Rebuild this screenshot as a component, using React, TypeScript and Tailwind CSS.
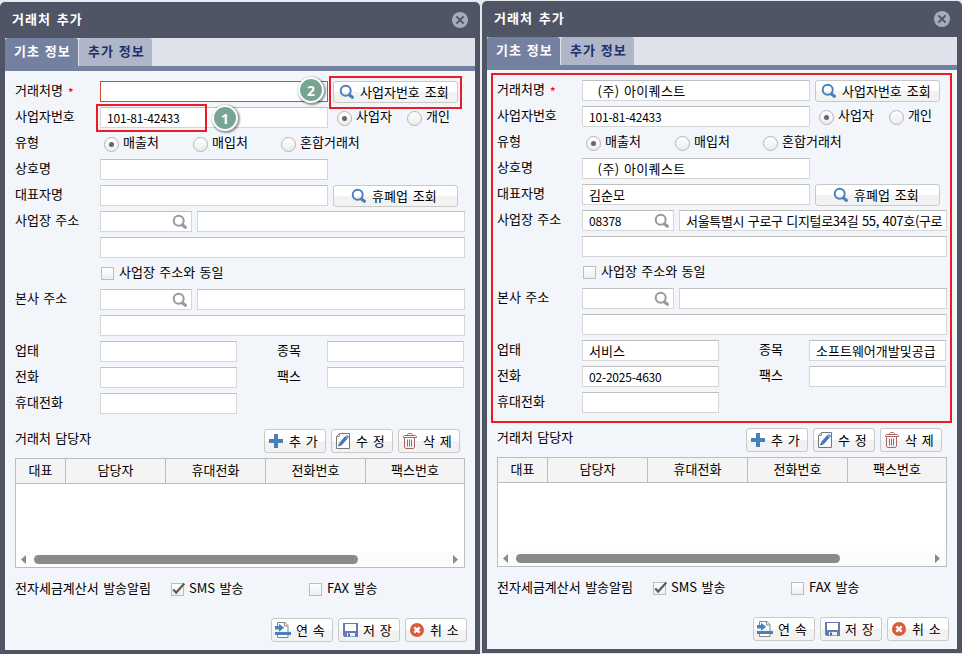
import type { ReactNode } from 'react';
import clsx from 'clsx';

type DialogData = {
  name?: string;
  bizNo?: string;
  company?: string;
  owner?: string;
  zip?: string;
  address?: string;
  industry?: string;
  item?: string;
  phone?: string;
};

const filled: DialogData = {
  name: '(주) 아이퀘스트',
  bizNo: '101-81-42433',
  company: '(주) 아이퀘스트',
  owner: '김순모',
  zip: '08378',
  address: '서울특별시 구로구 디지털로34길 55, 407호(구로',
  industry: '서비스',
  item: '소프트웨어개발및공급',
  phone: '02-2025-4630',
};

const SearchIcon = ({ color }: { color: string }) => (
  <svg width="16" height="16" viewBox="0 0 16 16" fill="none" className="shrink-0">
    <circle cx="6.7" cy="6.8" r="5" stroke={color} strokeWidth="2" />
    <path d="M10.4 11 L13.4 13.2" stroke={color} strokeWidth="3.2" strokeLinecap="round" />
  </svg>
);

const PlusIcon = () => (
  <svg width="14" height="14" viewBox="0 0 14 14" className="shrink-0">
    <path d="M5 0h4v5h5v4H9v5H5V9H0V5h5z" fill="#4a80b8" />
  </svg>
);

const EditIcon = () => (
  <svg width="14" height="16" viewBox="0 0 14 16" fill="none" className="shrink-0">
    <path d="M3.5 .5h10v15H.5V3.5z" fill="#fff" stroke="#777" />
    <path d="M.5 3.5h3v-3" stroke="#999" />
    <path d="M4.2 11.4 L10.6 4.2" stroke="#3f7abf" strokeWidth="3.4" />
    <path d="M2 13.6l.9-3 2.3 1.9z" fill="#35618f" />
    <path d="M10.4 2.4l2.4 2.2" stroke="#5d8fc8" strokeWidth="1.6" />
  </svg>
);

const TrashIcon = () => (
  <svg width="14" height="16" viewBox="0 0 14 16" fill="none" stroke="#ab6464" className="shrink-0">
    <path d="M4.5 2.5v-1l1-1h3l1 1v1M.5 4.5v-1l1-1h11l1 1v1zM1.5 5v9l1 1.5h8l1-1.5V5M4.5 6.5v7M6.5 6.5v7M8.5 6.5v7" />
  </svg>
);

const ContinueIcon = () => (
  <svg width="16" height="16" viewBox="0 0 16 16" fill="none" className="shrink-0">
    <path d="M2.5 4V.5h7.5l3 3V10M9.5 .5v3.5h3.5M2.5 12v3.5h10.5V13" fill="#fff" stroke="#858585" />
    <path d="M0 10h16v3H0z" fill="#4a80b8" />
    <path d="M0 4h4V1.8L9.2 5.8 4 9.8V7.6H0z" fill="#4584bf" />
  </svg>
);

const SaveIcon = () => (
  <svg width="15" height="14" viewBox="0 0 15 14" className="shrink-0">
    <path d="M0 0h15v14H1.5L0 12.5z" fill="#6479b5" />
    <path d="M2 1h11v7H2z" fill="#fff" />
    <path d="M4 10h8v3.4H4z" fill="#eef1f8" />
    <path d="M5 10.6h2v2.8H5z" fill="#5268a6" />
  </svg>
);

const CancelIcon = () => (
  <svg width="14" height="14" viewBox="0 0 14 14" className="shrink-0">
    <circle cx="7" cy="7" r="7" fill="#da5b3b" />
    <path d="M4.3 4.3l5.4 5.4M9.7 4.3L4.3 9.7" stroke="#fff" strokeWidth="2.4" />
  </svg>
);

const Input = ({ className, value, error, numeric, search }: {
  className: string;
  value?: string;
  error?: boolean;
  numeric?: boolean;
  search?: boolean;
}) => (
  <div
    className={clsx(
      'flex h-[21px] shrink-0 items-center overflow-hidden border bg-white px-[6px]',
      error ? 'border-[#cf4d35]' : 'border-[#d6d6d6] border-t-[#bfbfbf]',
      className,
    )}
  >
    <span className={clsx('min-w-0 flex-1 whitespace-pre pb-px leading-[17px]', numeric && 'text-[12px] tracking-[-0.2px]')}>
      {value}
    </span>
    {search && (
      <span className="-mr-[3px] shrink-0">
        <SearchIcon color="#999" />
      </span>
    )}
  </div>
);

const Button = ({ icon, children, className }: { icon: ReactNode; children: ReactNode; className: string }) => (
  <button
    type="button"
    className={clsx(
      'flex shrink-0 items-center whitespace-pre rounded-[3px] border border-[#c9c9c9] bg-linear-to-b from-white from-50% to-[#f2f2f2] to-50%',
      className,
    )}
  >
    {icon}
    <span className="pb-[2px] leading-[17px] [word-spacing:2px]">{children}</span>
  </button>
);

const Radio = ({ checked, children, className }: { checked?: boolean; children: ReactNode; className: string }) => (
  <span className={clsx('flex h-[21px] shrink-0 items-center', className)}>
    <span className="mt-px flex size-[15px] items-center justify-center rounded-full border border-[#b5b5b5] bg-linear-to-b from-white to-[#ececec]">
      {checked && <span className="size-[5px] rounded-full bg-[#666]" />}
    </span>
    <span className="ml-[4px] pb-[4px] leading-[17px]">{children}</span>
  </span>
);

const Checkbox = ({ checked, children, className }: { checked?: boolean; children: ReactNode; className?: string }) => (
  <span className={clsx('flex h-[21px] shrink-0 items-center', className)}>
    <span className="size-[13px] border border-[#bdbdbd] bg-linear-to-b from-white to-[#eee]">
      {checked && (
        <svg width="14" height="12" viewBox="0 0 14 12" fill="none" className="-mt-px overflow-visible">
          <path d="M1.2 6.4l3 3.2L12.3.6" stroke="#5c5c5c" strokeWidth="2.2" />
        </svg>
      )}
    </span>
    <span className="ml-[5px] pb-[4px] leading-[17px]">{children}</span>
  </span>
);

const Row = ({ label, required, children }: { label?: string; required?: boolean; children: ReactNode }) => (
  <div className="flex h-[26px] items-start">
    <div className="flex w-[85px] shrink-0 leading-[17px]">
      {label}
      {required && <span className="ml-[5px] mt-[3px] leading-[17px] text-[#f00]">*</span>}
    </div>
    {children}
  </div>
);

const Badge = ({ n, className }: { n: number; className: string }) => (
  <div
    className={clsx(
      'absolute flex size-[26px] items-center justify-center rounded-full border-2 border-white bg-[#76a693] font-["Noto_Sans"] text-[14px] font-bold text-white shadow-[1px_1px_2px_1px_rgba(0,0,0,0.4)]',
      className,
    )}
  >
    {n}
  </div>
);

const PartnerDialog = ({ data, invalid, children }: { data: DialogData; invalid?: boolean; children?: ReactNode }) => (
  <section className="relative flex h-[652px] w-[480px] shrink-0 flex-col rounded-t-[5px] bg-[#505566] px-[5px] pb-[4px]">
    <header className="flex h-[36px] shrink-0 items-center justify-between px-[7px] text-white">
      <h1 className="pb-[2px] font-bold tracking-[1px] [word-spacing:2px]">거래처 추가</h1>
      <svg width="16" height="16" viewBox="0 0 16 16">
        <circle cx="8" cy="8" r="8" fill="#a9acb6" />
        <path d="M4.4 4.4l7.2 7.2M11.6 4.4l-7.2 7.2" stroke="#505566" strokeWidth="2" />
      </svg>
    </header>

    <nav className="flex h-[33px] shrink-0 gap-px border-b-[5px] border-[#74809f] bg-[#dfe2eb] font-bold tracking-[1px] [word-spacing:1px]">
      <span className="w-[73px] rounded-t-[3px] bg-[#74809f] pl-[9px] leading-[25px] text-white">기초 정보</span>
      <span className="w-[73px] rounded-t-[3px] bg-[#afb6c8] pl-[9px] leading-[25px] text-[#203068]">추가 정보</span>
    </nav>

    <div className="flex-1 bg-[#f2f5fa] pl-[10px] pt-[10px]">
      <Row label="거래처명" required>
        <Input className="w-[228px] tracking-[0.4px] [word-spacing:1px]" value={data.name && `  ${data.name}`} error={invalid} />
        <Button className="ml-[5px] h-[22px] w-[125px] gap-[5px] pl-[5px]" icon={<SearchIcon color="#4a80b8" />}>
          사업자번호 조회
        </Button>
      </Row>
      <Row label="사업자번호">
        <Input className="w-[228px]" value={data.bizNo} numeric />
        <Radio className="ml-[9px] w-[70px]" checked>사업자</Radio>
        <Radio className="w-[60px]">개인</Radio>
      </Row>
      <Row label="유형">
        <Radio className="ml-[4px] w-[89px]" checked>매출처</Radio>
        <Radio className="w-[88px]">매입처</Radio>
        <Radio className="w-[90px]">혼합거래처</Radio>
      </Row>
      <Row label="상호명">
        <Input className="w-[228px] tracking-[0.4px] [word-spacing:1px]" value={data.company && `  ${data.company}`} />
      </Row>
      <Row label="대표자명">
        <Input className="w-[228px]" value={data.owner} />
        <Button className="ml-[5px] h-[22px] w-[125px] gap-[5px] pl-[17px]" icon={<SearchIcon color="#4a80b8" />}>
          휴폐업 조회
        </Button>
      </Row>
      <Row label="사업장 주소">
        <Input className="w-[92px]" value={data.zip} numeric search />
        <Input className="ml-[5px] w-[268px] tracking-[-0.32px] [word-spacing:1px]" value={data.address} />
      </Row>
      <Row>
        <Input className="w-[365px]" />
      </Row>
      <Row>
        <Checkbox className="ml-px">사업장 주소와 동일</Checkbox>
      </Row>
      <Row label="본사 주소">
        <Input className="w-[92px]" search />
        <Input className="ml-[5px] w-[268px]" />
      </Row>
      <Row>
        <Input className="w-[365px]" />
      </Row>
      <Row label="업태">
        <Input className="w-[137px]" value={data.industry} />
        <span className="ml-[40px] w-[50px] leading-[17px]">종목</span>
        <Input className="w-[137px]" value={data.item} />
      </Row>
      <Row label="전화">
        <Input className="w-[137px]" value={data.phone} numeric />
        <span className="ml-[40px] w-[50px] leading-[17px]">팩스</span>
        <Input className="w-[137px]" />
      </Row>
      <Row label="휴대전화">
        <Input className="w-[137px]" />
      </Row>

      <div className="mt-[10px] flex h-[29px] w-[445px] items-start gap-[5px]">
        <span className="flex-1 leading-[17px]">거래처 담당자</span>
        <Button className="h-[24px] w-[62px] gap-[6px] pl-[4px]" icon={<PlusIcon />}>추 가</Button>
        <Button className="h-[24px] w-[62px] gap-[6px] pl-[4px]" icon={<EditIcon />}>수 정</Button>
        <Button className="h-[24px] w-[62px] gap-[6px] pl-[4px]" icon={<TrashIcon />}>삭 제</Button>
      </div>

      <div className="flex h-[110px] w-[450px] flex-col border border-[#babcc0] bg-white">
        <div className="flex h-[25px] border-b border-[#babcc0] bg-[#f4f4f4] text-center leading-[22px]">
          <span className="w-[50px] border-r border-[#babcc0]">대표</span>
          <span className="w-[100px] border-r border-[#babcc0]">담당자</span>
          <span className="w-[100px] border-r border-[#babcc0]">휴대전화</span>
          <span className="w-[100px] border-r border-[#babcc0]">전화번호</span>
          <span className="flex-1">팩스번호</span>
        </div>
        <div className="mt-auto flex h-[15px] items-center bg-[#fcfcfc] pl-[5px] pr-[6px]">
          <svg width="5" height="9" viewBox="0 0 5 9"><path d="M5 0v9L0 4.5z" fill="#8a8a8a" /></svg>
          <span className="ml-[8px] h-[9px] w-[324px] rounded-full bg-[#8a8a8a]" />
          <svg width="5" height="9" viewBox="0 0 5 9" className="ml-auto"><path d="M0 0v9l5-4.5z" fill="#8a8a8a" /></svg>
        </div>
      </div>

      <div className="mt-[11px] flex h-[39px] items-start">
        <span className="w-[156px] leading-[17px]">전자세금계산서 발송알림</span>
        <Checkbox className="w-[138px]" checked>SMS 발송</Checkbox>
        <Checkbox>FAX 발송</Checkbox>
      </div>

      <div className="flex w-[452px] justify-end gap-[5px]">
        <Button className="h-[24px] w-[62px] gap-[5px] pl-[3px]" icon={<ContinueIcon />}>연 속</Button>
        <Button className="h-[24px] w-[62px] gap-[5px] pl-[4px]" icon={<SaveIcon />}>저 장</Button>
        <Button className="h-[24px] w-[62px] gap-[6px] pl-[4px]" icon={<CancelIcon />}>취 소</Button>
      </div>
    </div>
    {children}
  </section>
);

const App = () => (
  <main className="flex h-[654px] w-[962px] gap-[2px] overflow-hidden bg-[#e6eaee] font-['Noto_Sans_CJK_KR',sans-serif] text-[13px] text-black [word-spacing:1.5px]">
    <div className="pt-[2px]">
      <PartnerDialog data={{ bizNo: '101-81-42433' }} invalid>
        {/* step markers */}
        <div className="absolute left-[96px] top-[102px] h-[28px] w-[111px] border-2 border-[#ed1c24]" />
        <div className="absolute left-[329px] top-[74px] h-[33px] w-[133px] border-2 border-[#ed1c24]" />
        <Badge n={1} className="left-[212px] top-[103px]" />
        <Badge n={2} className="left-[298px] top-[75px]" />
      </PartnerDialog>
    </div>
    <div className="pt-px">
      <PartnerDialog data={filled}>
        <div className="absolute left-[9px] top-[72px] h-[350px] w-[461px] border-2 border-[#ed1c24]" />
      </PartnerDialog>
    </div>
  </main>
);

export default App;
